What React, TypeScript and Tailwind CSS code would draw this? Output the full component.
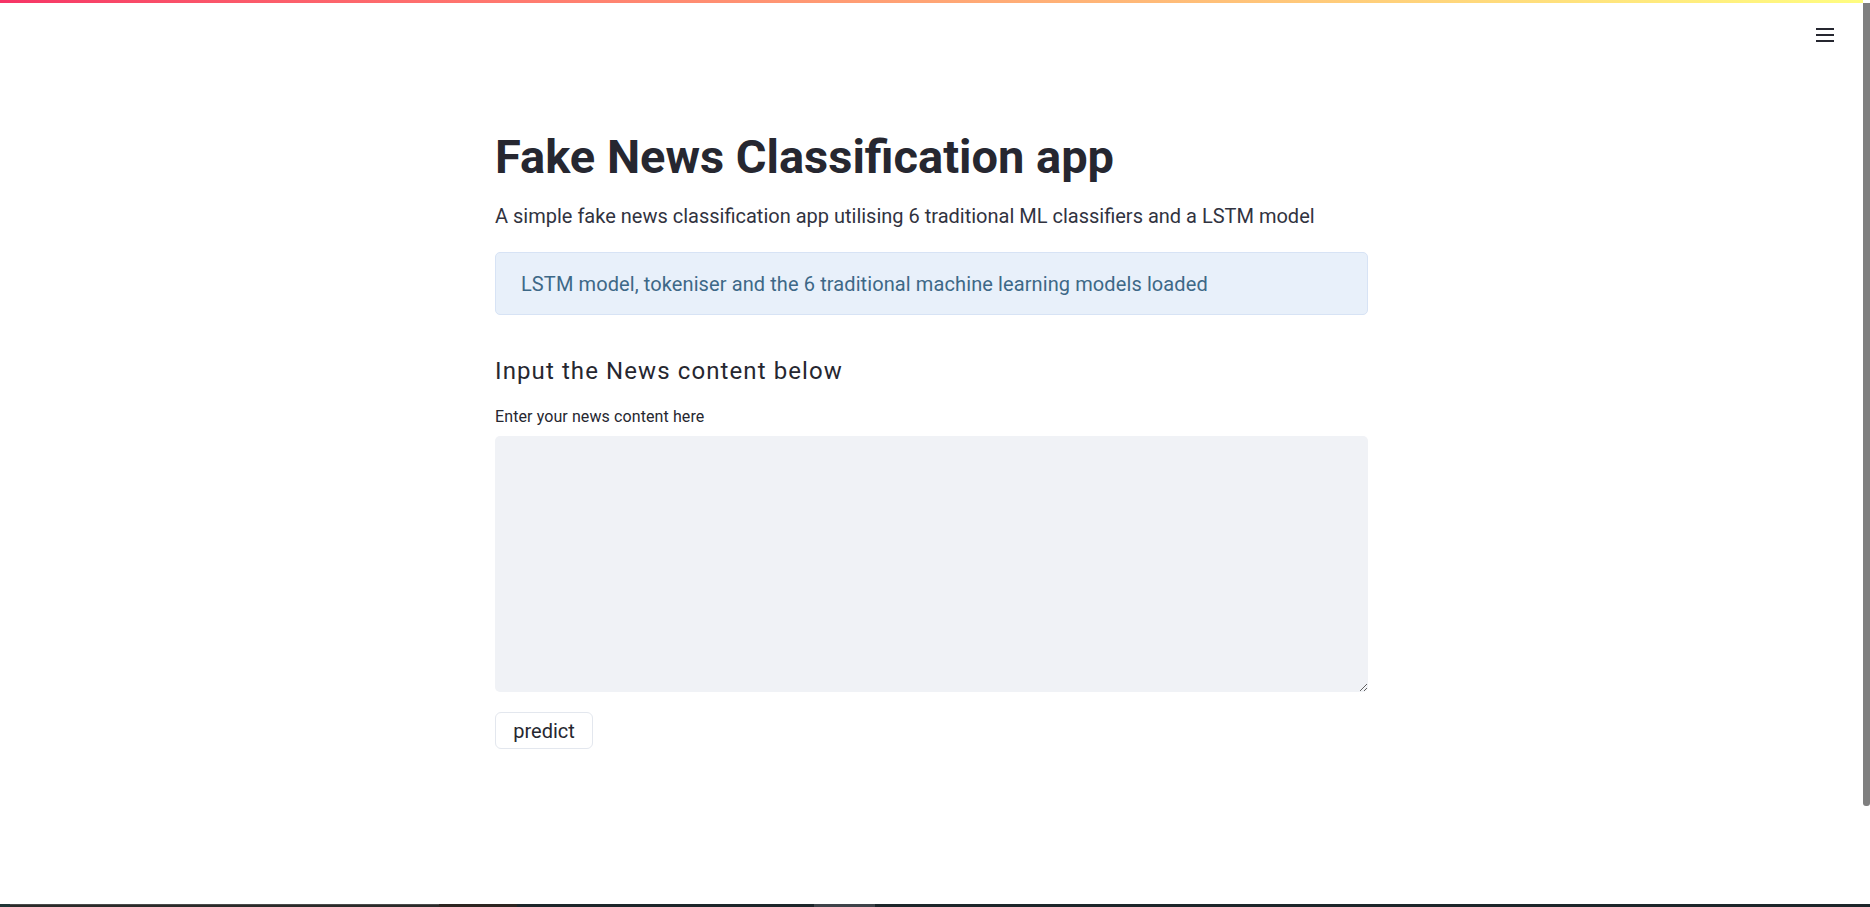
import { useState } from 'react';

function MenuIcon() {
  return (
    <svg width="20" height="16" viewBox="0 0 20 16" fill="none" aria-hidden="true">
      <path d="M1 2h18M1 8h18M1 14h18" stroke="#262730" strokeWidth="2" />
    </svg>
  );
}

export default function App() {
  const [text, setText] = useState('');

  return (
    <div className="flex h-[907px] w-full flex-col overflow-hidden bg-white font-['Roboto',sans-serif] text-[#262730]">
      <div className="flex min-h-0 flex-1">
        <div className="relative flex min-w-0 flex-1 flex-col">
          <div className="h-[3px] bg-gradient-to-r from-[#f63366] to-[#fffd80]" />

          <button className="absolute right-[28px] top-[27px] p-0" aria-label="Menu">
            <MenuIcon />
          </button>

          <main className="mx-auto w-[873px] pt-[126px]">
            <h1 className="text-[47px] font-bold leading-[1.2]">Fake News Classification app</h1>
            <p className="mt-[15px] text-[20px] leading-[1.6] text-[#31333f]">
              A simple fake news classification app utilising 6 traditional ML classifiers and a LSTM model
            </p>

            <div className="mt-[20px] rounded-[5px] border border-[#d7e3f5] bg-[#e8f0fa] px-[25px] pb-[14px] pt-[15px] text-[20px] leading-[1.6] tracking-[0.1px] text-[#3d6887]">
              LSTM model, tokeniser and the 6 traditional machine learning models loaded
            </div>

            <h3 className="mt-[42px] text-[24px] font-normal leading-[1.2] tracking-[1.1px]">Input the News content below</h3>

            <label className="mt-[19px] block text-[16px] leading-[1.5] tracking-[0.1px]" htmlFor="news">
              Enter your news content here
            </label>
            <textarea
              id="news"
              value={text}
              onChange={(e) => setText(e.target.value)}
              className="mt-[7px] block h-[256px] w-full resize-y rounded-[5px] bg-[#f0f2f6] px-3 py-2 text-[20px] outline-none"
            />

            <button className="mt-[20px] h-[37px] w-[98px] rounded-[6px] border border-[#e3e7ee] bg-white text-[20px] leading-none text-[#262730]">
              predict
            </button>
          </main>
        </div>

        <div className="w-[7px] pt-[3px]">
          <div className="h-[803px] rounded-b-[3px] bg-[#7f7f7f]" />
        </div>
      </div>

      <div className="flex h-[3px]">
        <div className="w-[10px] bg-[#1f3536]" />
        <div className="w-[429px] border-t border-[#4a4a4a] bg-[#2a2a2a]" />
        <div className="w-[78px] bg-[#2d2420]" />
        <div className="w-[297px] bg-[#1c252a]" />
        <div className="w-[61px] bg-[#3e4349]" />
        <div className="flex-1 bg-[#1c252a]" />
      </div>
    </div>
  );
}
